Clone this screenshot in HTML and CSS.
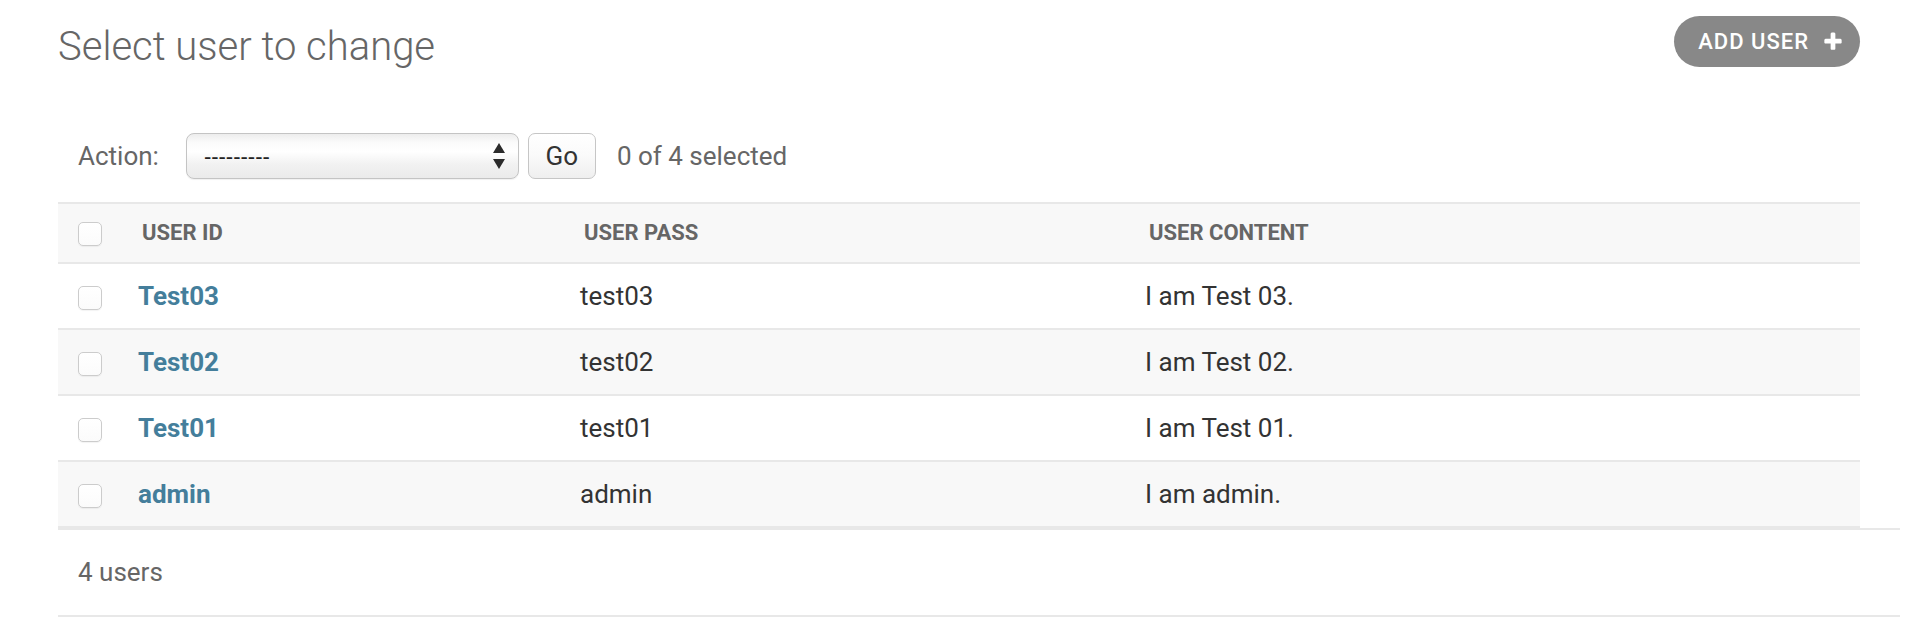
FILE: index.html
```html
<!DOCTYPE html>
<html lang="en">
<head>
<meta charset="utf-8">
<title>Select user to change</title>
<link rel="stylesheet" href="styles.css">
</head>
<body>
<div class="content">
  <div class="page-head">
    <h1 class="title">Select user to change</h1>
    <a class="addlink" href="#">ADD USER<svg class="plus-icon" viewBox="0 0 1792 1792" aria-hidden="true"><path fill="#ffffff" d="M1600 736v192q0 40-28 68t-68 28h-416v416q0 40-28 68t-68 28h-192q-40 0-68-28t-28-68v-416h-416q-40 0-68-28t-28-68v-192q0-40 28-68t68-28h416v-416q0-40 28-68t68-28h192q40 0 68 28t28 68v416h416q40 0 68 28t28 68z"/></svg></a>
  </div>
  <div class="changelist">
    <div class="actions">
      <label class="action-label" for="action">Action:</label>
      <div class="select-wrap">
        <select id="action" class="action-select"><option>---------</option></select>
        <svg class="select-arrows" viewBox="0 0 12 26" aria-hidden="true"><path d="M6 0L12 10H0z" fill="#2b2b2b"/><path d="M0 16h12L6 26z" fill="#2b2b2b"/></svg>
      </div>
      <button class="go-btn" type="button">Go</button>
      <span class="counter">0 of 4 selected</span>
    </div>
    <table class="result-list">
      <colgroup>
        <col class="col-check">
        <col class="col-id">
        <col class="col-pass">
        <col class="col-content">
      </colgroup>
      <thead>
        <tr>
          <th class="th-check"><input class="check" type="checkbox"></th>
          <th class="th-text">USER ID</th>
          <th class="th-text">USER PASS</th>
          <th class="th-text">USER CONTENT</th>
        </tr>
      </thead>
      <tbody>
        <tr>
          <td class="td-check"><input class="check" type="checkbox"></td>
          <td class="td-link"><a href="#">Test03</a></td>
          <td>test03</td>
          <td>I am Test 03.</td>
        </tr>
        <tr>
          <td class="td-check"><input class="check" type="checkbox"></td>
          <td class="td-link"><a href="#">Test02</a></td>
          <td>test02</td>
          <td>I am Test 02.</td>
        </tr>
        <tr>
          <td class="td-check"><input class="check" type="checkbox"></td>
          <td class="td-link"><a href="#">Test01</a></td>
          <td>test01</td>
          <td>I am Test 01.</td>
        </tr>
        <tr>
          <td class="td-check"><input class="check" type="checkbox"></td>
          <td class="td-link"><a href="#">admin</a></td>
          <td>admin</td>
          <td>I am admin.</td>
        </tr>
      </tbody>
    </table>
    <p class="paginator">4 users</p>
  </div>
</div>
</body>
</html>
```
FILE: styles.css
```css
html, body {
  margin: 0;
  padding: 0;
  background: #ffffff;
}

body {
  font-family: Roboto, "Liberation Sans", sans-serif;
  color: #333333;
}

.content {
  padding: 16px 52px 0 58px;
}

.page-head {
  display: flex;
  justify-content: space-between;
  align-items: flex-start;
  height: 51px;
}

.title {
  margin: 7px 0 0;
  font-size: 40px;
  font-weight: 300;
  line-height: 48px;
  color: #666666;
}

.addlink {
  display: flex;
  align-items: center;
  height: 51px;
  box-sizing: border-box;
  padding: 0 16px 0 24px;
  border-radius: 26px;
  background: #888888;
  color: #ffffff;
  text-decoration: none;
  font-size: 22px;
  font-weight: 500;
  letter-spacing: 1px;
}

.plus-icon {
  width: 22px;
  height: 22px;
  margin-left: 13px;
}

.actions {
  display: flex;
  align-items: center;
  height: 46px;
  margin-top: 66px;
  padding-left: 20px;
  font-size: 26px;
  color: #666666;
}

.action-label {
  margin-right: 27px;
}

.select-wrap {
  position: relative;
  width: 333px;
  height: 46px;
}

.action-select {
  -webkit-appearance: none;
  appearance: none;
  width: 100%;
  height: 100%;
  box-sizing: border-box;
  margin: 0;
  padding: 0 0 0 17px;
  border: 1px solid #c4c4c4;
  border-radius: 8px;
  background: linear-gradient(#ededed 0%, #fbfbfb 20%, #ffffff 40%, #f1f1f1 70%, #ebebeb 100%);
  font-family: "Liberation Sans", Arial, sans-serif;
  font-size: 22px;
  color: #222222;
  box-shadow: 0 1px 1px rgba(0, 0, 0, 0.06);
}

.select-arrows {
  position: absolute;
  right: 14px;
  top: 10px;
  width: 12px;
  height: 26px;
  pointer-events: none;
}

.go-btn {
  margin: 0 0 0 9px;
  width: 68px;
  height: 46px;
  padding: 0;
  border: 1px solid #c6c6c6;
  border-radius: 7px;
  background: linear-gradient(#ffffff 0%, #fafafa 50%, #efefef 100%);
  font-family: Roboto, "Liberation Sans", sans-serif;
  font-size: 26px;
  color: #333333;
}

.counter {
  margin-left: 21px;
}

.result-list {
  width: 100%;
  margin-top: 23px;
  border-spacing: 0;
  table-layout: fixed;
}

.col-check { width: 64px; }
.col-id { width: 442px; }
.col-pass { width: 565px; }

.result-list th {
  padding: 0 0 0 20px;
  line-height: 58px;
  background: #f8f8f8;
  border-top: 2px solid #e8e8e8;
  border-bottom: 2px solid #e8e8e8;
  text-align: left;
  font-size: 22px;
  font-weight: 700;
  color: #666666;
  white-space: nowrap;
}

.result-list td {
  padding: 0 0 0 16px;
  line-height: 64px;
  border-bottom: 2px solid #e8e8e8;
  font-size: 26px;
  color: #333333;
  white-space: nowrap;
}

.result-list .th-check,
.result-list .td-check {
  padding-left: 20px;
}

.result-list tbody tr:nth-child(even) td {
  background: #f8f8f8;
}

.td-link a {
  color: #447e9b;
  font-weight: 700;
  text-decoration: none;
}

.check {
  -webkit-appearance: none;
  appearance: none;
  display: inline-block;
  vertical-align: middle;
  width: 24px;
  height: 24px;
  margin: 0;
  box-sizing: border-box;
  border: 1px solid #cccccc;
  border-radius: 5px;
  background: linear-gradient(#ffffff, #fbfbfb);
  box-shadow: 0 1px 1px rgba(0, 0, 0, 0.05);
}

.paginator {
  margin: 0;
  width: 100%;
  padding: 0 20px;
  border-top: 2px solid #e8e8e8;
  border-bottom: 2px solid #e8e8e8;
  line-height: 85px;
  font-size: 26px;
  color: #666666;
}
```
